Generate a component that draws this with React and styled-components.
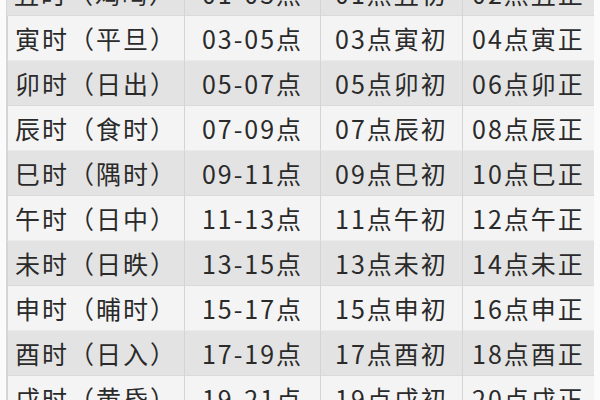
import React from 'react';
import styled, { createGlobalStyle } from 'styled-components';

const rows = [
  ['丑时（鸡鸣）', '01-03点', '01点丑初', '02点丑正'],
  ['寅时（平旦）', '03-05点', '03点寅初', '04点寅正'],
  ['卯时（日出）', '05-07点', '05点卯初', '06点卯正'],
  ['辰时（食时）', '07-09点', '07点辰初', '08点辰正'],
  ['巳时（隅时）', '09-11点', '09点巳初', '10点巳正'],
  ['午时（日中）', '11-13点', '11点午初', '12点午正'],
  ['未时（日昳）', '13-15点', '13点未初', '14点未正'],
  ['申时（晡时）', '15-17点', '15点申初', '16点申正'],
  ['酉时（日入）', '17-19点', '17点酉初', '18点酉正'],
  ['戌时（黄昏）', '19-21点', '19点戌初', '20点戌正'],
];

const GlobalStyle = createGlobalStyle`
  body {
    margin: 0;
    background: #fbfbfb;
    font-family: "Noto Sans CJK SC", "Noto Sans", sans-serif;
  }
`;

const Page = styled.div`
  width: 600px;
  height: 400px;
  overflow: hidden;
  padding: 0 7px 0 6px;
  box-sizing: border-box;
`;

const Table = styled.div`
  margin-top: -29px;
  display: grid;
  grid-template-columns: 177px 136px 142px 132px;
  border-left: 1px solid #d6d6d6;
  border-right: 1px solid #d6d6d6;
`;

const Cell = styled.div`
  height: 45px;
  display: flex;
  align-items: center;
  justify-content: center;
  font-size: 25px;
  letter-spacing: 2px;
  color: #2a2a2a;
  background: ${p => (p.shade ? '#e3e3e3' : '#f4f4f4')};
  border-bottom: 1px solid ${p => (p.shade ? '#dadada' : '#ebebeb')};
  box-sizing: border-box;
  white-space: nowrap;
  & + & {
    border-left: 1px solid #d4d4d4;
  }
  ${p => p.first && 'justify-content: flex-start; padding-left: 7px;'}
`;

export default function App() {
  return (
    <>
      <GlobalStyle />
      <Page>
        <Table>
          {rows.map((r, i) =>
            r.map((t, j) => (
              <Cell key={i + '-' + j} shade={i % 2 === 0} first={j === 0}>
                {t}
              </Cell>
            ))
          )}
        </Table>
      </Page>
    </>
  );
}
